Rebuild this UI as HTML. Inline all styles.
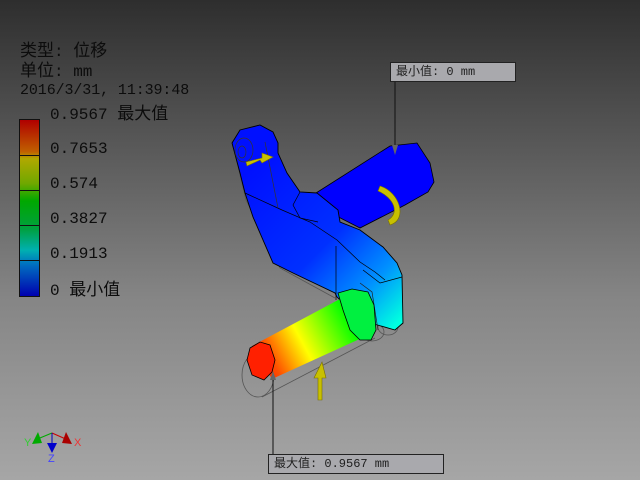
<!DOCTYPE html>
<html><head><meta charset="utf-8"><style>
html,body{margin:0;padding:0;width:640px;height:480px;overflow:hidden}
body{background:linear-gradient(#2e2e2e 0%,#555 28%,#858585 62%,#a6a6a6 100%);position:relative;font-family:"Liberation Mono","Noto Sans CJK SC",monospace;color:#0c0c0c}
.t{position:absolute;font-size:16px;line-height:16px;white-space:nowrap}
.c{font-family:"Noto Sans CJK SC",sans-serif;font-size:17px}
.box{position:absolute;background:#a9a9ad;border:1px solid #222;font-size:12px;line-height:18px;padding-left:5px;box-sizing:border-box;color:#202020}
</style></head><body>
<div class="t" style="left:20px;top:41px"><span class="c">类型</span>: <span class="c">位移</span></div>
<div class="t" style="left:20px;top:61px"><span class="c">单位</span>: mm</div>
<div class="t" style="left:20px;top:83px;font-size:15px;letter-spacing:-0.1px">2016/3/31, 11:39:48</div>
<div class="t" style="left:50px;top:104px">0.9567 <span class="c">最大值</span></div>
<div class="t" style="left:50px;top:141px">0.7653</div>
<div class="t" style="left:50px;top:176px">0.574</div>
<div class="t" style="left:50px;top:211px">0.3827</div>
<div class="t" style="left:50px;top:246px">0.1913</div>
<div class="t" style="left:50px;top:280px">0 <span class="c">最小值</span></div>
<div style="position:absolute;left:19px;top:119px;width:19px;height:176px;border:1px solid #111;background:linear-gradient(#b00000,#c06000 18%,#b0a800 22%,#70a800 36%,#00a800 46%,#00a040 62%,#00b0b0 74%,#0070c0 82%,#0000b0 100%)">
<div style="position:absolute;top:35px;left:0;right:0;border-top:1px solid #111"></div>
<div style="position:absolute;top:70px;left:0;right:0;border-top:1px solid #111"></div>
<div style="position:absolute;top:105px;left:0;right:0;border-top:1px solid #111"></div>
<div style="position:absolute;top:140px;left:0;right:0;border-top:1px solid #111"></div>
</div>
<svg width="640" height="480" style="position:absolute;left:0;top:0">
<defs>
<linearGradient id="bl" x1="250" y1="170" x2="400" y2="320" gradientUnits="userSpaceOnUse">
<stop offset="0" stop-color="#0010ff"/><stop offset="0.5" stop-color="#0030ff"/><stop offset="0.78" stop-color="#0090ff"/><stop offset="1" stop-color="#00ffe0"/></linearGradient>
<linearGradient id="sh" x1="258" y1="370" x2="360" y2="315" gradientUnits="userSpaceOnUse">
<stop offset="0" stop-color="#ff2000"/><stop offset="0.15" stop-color="#ff5000"/><stop offset="0.45" stop-color="#ffff00"/><stop offset="0.9" stop-color="#00ff00"/><stop offset="1" stop-color="#00f040"/></linearGradient>
</defs>
<g stroke="#555" fill="none" stroke-width="0.8">
<ellipse cx="258" cy="375" rx="16" ry="22"/>
<line x1="262" y1="397" x2="375" y2="338"/>
<ellipse cx="372" cy="332" rx="12" ry="9"/>
<ellipse cx="388" cy="327" rx="10" ry="8"/>
<path d="M234 150 L246 200 L280 268 L335 298"/>
</g>
<polygon points="305,200 390,146 417,143 430,163 434,182 428,192 405,205 360,228" fill="#0000ff" stroke="#000" stroke-width="0.8"/>
<polygon points="232,143 240,130 260,125 273,132 278,143 278,153 287,173 300,192 317,193 338,210 340,222 360,230 383,247 397,263 402,275 403,323 395,330 360,320 337,297 335,293 293,273 273,263 253,217 245,193 240,173" fill="url(#bl)" stroke="#000" stroke-width="0.9"/>
<g stroke="#000" fill="none" stroke-width="0.7">
<path d="M245 193 L282 210 L310 222 L337 240 L360 262 L375 272 L385 280"/>
<path d="M300 192 L293 205 L300 218 L318 222"/>
<path d="M336 246 L336 300"/>
<path d="M363 270 L380 283 L402 277"/>
<path d="M360 283 L372 292 L378 330" stroke="#222"/>
<ellipse cx="244" cy="150" rx="9" ry="12" stroke="#333"/>
<ellipse cx="242" cy="152" rx="4" ry="6" stroke="#333"/>
<path d="M265 142 L278 208" stroke="#333"/>
</g>
<polygon points="252,346 340,299 364,337 272,379" fill="url(#sh)"/>
<polygon points="338,293 352,289 368,292 374,305 376,330 371,340 360,340 350,330 343,310" fill="#00f040" stroke="#000" stroke-width="0.8"/>
<polygon points="250,348 260,342 270,345 275,360 272,372 264,380 252,375 247,360" fill="#ff2000" stroke="#000" stroke-width="0.8"/>
<g fill="#c8c000" stroke="#7a7000" stroke-width="0.6">
<path d="M318 370 L314 378 L318 378 L318 400 L322 400 L322 378 L326 378 L322 362 Z"/>
<path d="M246 162 L262 158 L262 153 L273 157 L262 163 L260 160 L247 166 Z"/>
<path d="M380 186 C400 192 408 220 390 225 L388 220 C400 213 394 198 378 191 Z"/>
</g>
<g stroke="#111" stroke-width="1">
<line x1="395" y1="82" x2="395" y2="150"/>
<line x1="273" y1="380" x2="273" y2="454"/>
</g>
<polygon points="392,145 398,145 395,155" fill="#666"/>
<polygon points="270,380 276,380 273,371" fill="#666"/>
<g>
<line x1="35" y1="440" x2="52" y2="433" stroke="#0a0" stroke-width="1"/>
<line x1="52" y1="433" x2="68" y2="440" stroke="#c00" stroke-width="1"/>
<line x1="52" y1="433" x2="52" y2="448" stroke="#00b" stroke-width="1"/>
<polygon points="32,444 38,432 42,443" fill="#0a0"/>
<polygon points="62,443 66,432 72,444" fill="#a00"/>
<polygon points="47,443 57,443 52,453" fill="#00c"/>
<text x="24" y="446" font-size="11" fill="#3c3" font-family="Liberation Sans">Y</text>
<text x="74" y="446" font-size="11" fill="#e33" font-family="Liberation Sans">X</text>
<text x="48" y="462" font-size="11" fill="#44f" font-family="Liberation Sans">Z</text>
</g>
</svg>
<div class="box" style="left:390px;top:62px;width:126px;height:20px">最小值: 0 mm</div>
<div class="box" style="left:268px;top:454px;width:176px;height:20px">最大值: 0.9567 mm</div>
</body></html>
